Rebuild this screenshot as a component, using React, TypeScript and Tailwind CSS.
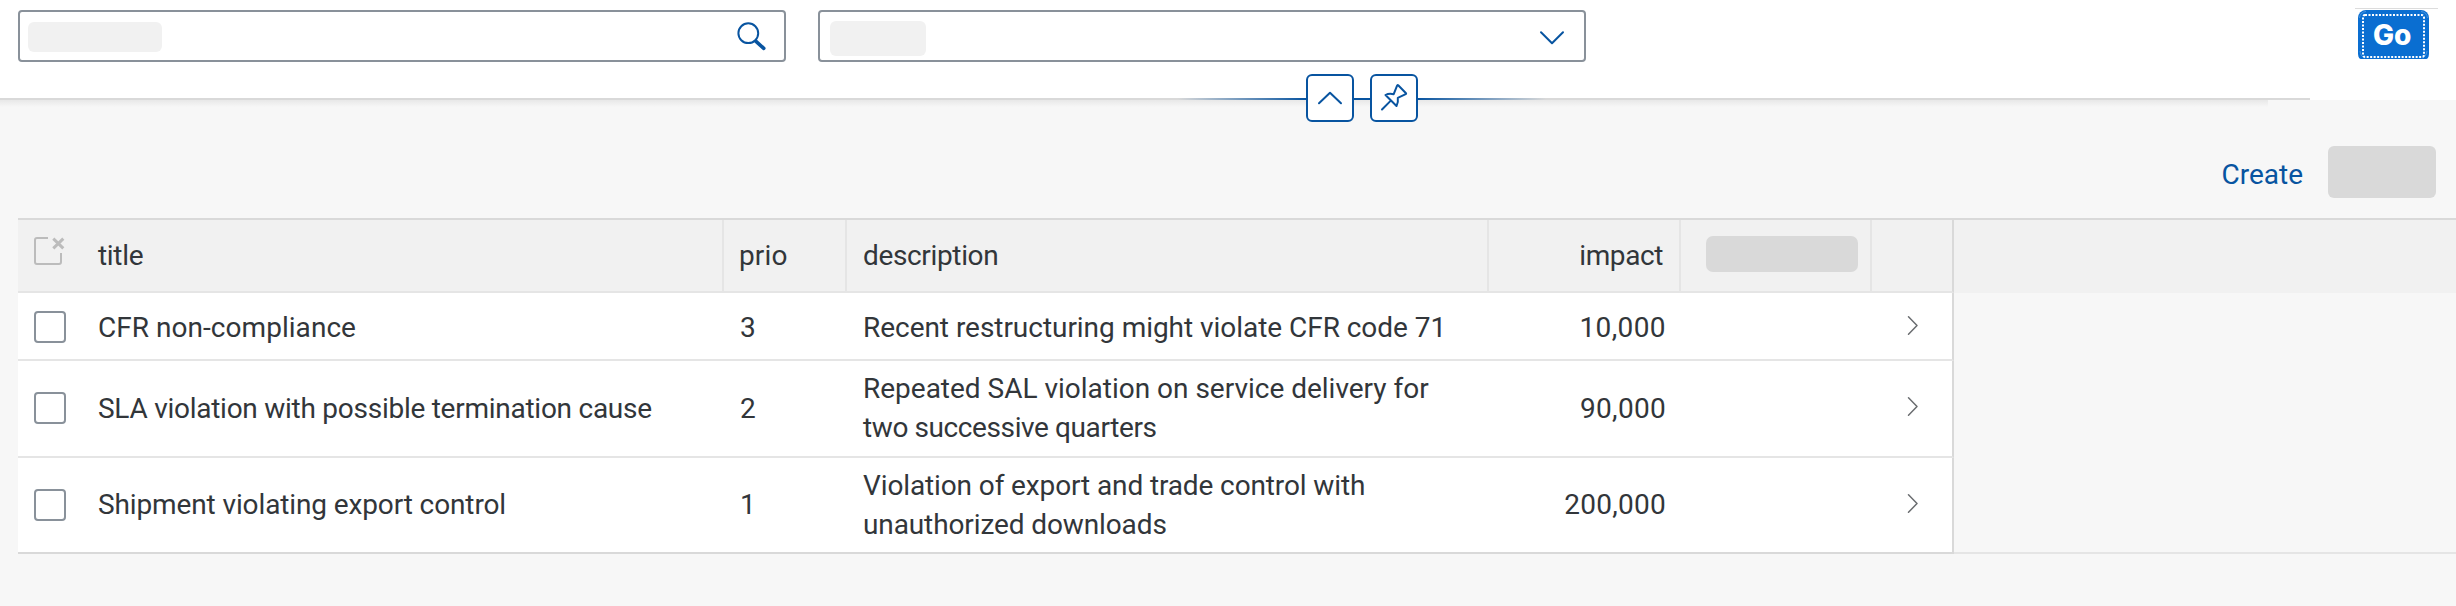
import React from "react";

type Risk = {
  title: string;
  titleTracking: string;
  prio: string;
  description: { text: string; tracking: string }[];
  impact: string;
  impactTracking: string;
  height: string;
  textPad: string;
  descriptionPad: string;
  boxTop: string;
  chevronTop: string;
  border: string;
};

const risks: Risk[] = [
  {
    title: "CFR non-compliance",
    titleTracking: "tracking-[0.04px]",
    prio: "3",
    description: [{ text: "Recent restructuring might violate CFR code 71", tracking: "tracking-[-0.04px]" }],
    impact: "10,000",
    impactTracking: "tracking-[0.4px]",
    height: "h-[68px]",
    textPad: "pt-[15px]",
    descriptionPad: "pt-[15px]",
    boxTop: "mt-[18px]",
    chevronTop: "mt-[22px]",
    border: "border-[#e5e5e5]",
  },
  {
    title: "SLA violation with possible termination cause",
    titleTracking: "tracking-[-0.26px]",
    prio: "2",
    description: [
      { text: "Repeated SAL violation on service delivery for", tracking: "tracking-[-0.01px]" },
      { text: "two successive quarters", tracking: "tracking-[-0.4px]" },
    ],
    impact: "90,000",
    impactTracking: "tracking-[0.3px]",
    height: "h-[97px]",
    textPad: "pt-[28px]",
    descriptionPad: "pt-[8px]",
    boxTop: "mt-[31px]",
    chevronTop: "mt-[35px]",
    border: "border-[#e5e5e5]",
  },
  {
    title: "Shipment violating export control",
    titleTracking: "tracking-[-0.12px]",
    prio: "1",
    description: [
      { text: "Violation of export and trade control with", tracking: "tracking-[-0.12px]" },
      { text: "unauthorized downloads", tracking: "tracking-[-0.11px]" },
    ],
    impact: "200,000",
    impactTracking: "tracking-[0.25px]",
    height: "h-[96px]",
    textPad: "pt-[27px]",
    descriptionPad: "pt-[8px]",
    boxTop: "mt-[31px]",
    chevronTop: "mt-[35px]",
    border: "border-[#d9d9d9]",
  },
];

const columns = "grid grid-cols-[706px_123px_642px_192px_191px_80px]";

function SearchIcon() {
  return (
    <svg width="30" height="30" viewBox="0 0 30 30" fill="none" stroke="#0854a0" className="mt-[10px] mr-[17px]">
      <circle cx="11.3" cy="11.2" r="9.9" strokeWidth="2" />
      <path d="M19 19.3 26.8 26.4" strokeWidth="3.6" strokeLinecap="round" />
    </svg>
  );
}

function RowChevron() {
  return (
    <svg width="12" height="21" viewBox="0 0 12 21" fill="none" stroke="#6a6d70" strokeWidth="1.5" strokeLinecap="round" strokeLinejoin="round">
      <path d="M1.5 1.7 10 10.5 1.5 19.3" />
    </svg>
  );
}

function FilterBar() {
  return (
    <header className="flex h-[98px] items-start bg-white pt-[10px] pl-[18px]">
      <div className="flex h-[52px] w-[768px] items-start justify-between rounded-[4px] border-2 border-[#89919a] bg-white">
        <div className="mt-[10px] ml-[8px] h-[30px] w-[134px] rounded-[6px] bg-[#f1f1f1]" />
        <SearchIcon />
      </div>
      <div className="ml-[32px] flex h-[52px] w-[768px] items-start justify-between rounded-[4px] border-2 border-[#89919a] bg-white">
        <div className="mt-[9px] ml-[10px] h-[35px] w-[96px] rounded-[6px] bg-[#f1f1f1]" />
        <svg width="26" height="16" viewBox="0 0 26 16" fill="none" stroke="#0854a0" strokeWidth="2" strokeLinecap="round" strokeLinejoin="round" className="mt-[18px] mr-[19px]">
          <path d="M2 2.2 13 13.2 24 2.2" />
        </svg>
      </div>
      <div className="-mt-[2px] mr-[18px] ml-auto w-[83px] border-t border-[#dcdcdc] pt-px pl-[3px]">
        <div className="h-[49px] w-[71px] overflow-hidden rounded-b-[3px]">
          <button className="relative flex h-[52px] w-[71px] items-start rounded-[8px] bg-[#0a6ed1] pt-[5px] pl-[15px] text-left font-['Inter',sans-serif] text-[28px] leading-[40px] font-extrabold text-white">
            Go
            <svg width="71" height="49" viewBox="0 0 71 49" fill="none" className="absolute top-0 left-0">
              <path d="M1.5 8C2 4 4 2 8 1.5M63 1.5c4 .5 6 2.500 6.500 6.500M2 41c.5 4 2 6 5 7M69 41c-.5 4-2 6-5 7" stroke="#5b9fe0" strokeWidth="0.8" />
              <rect x="5" y="5" width="61" height="42" rx="2" stroke="#fff" strokeWidth="2" strokeDasharray="2 1.5" />
            </svg>
          </button>
        </div>
      </div>
    </header>
  );
}

function HeaderDivider() {
  return (
    <div className="relative h-[2px] bg-white">
      <div className="h-[2px] w-[2310px] bg-[linear-gradient(90deg,#d9d9d9_1178px,#0854a0_1306px,#0854a0_1418px,#d9d9d9_1546px)]" />
      <div className="h-[7px] w-[2268px] bg-linear-to-b from-[#e8e8e8] to-[#f7f7f7]" />
      <div className="absolute top-[-24px] left-[1306px] flex gap-[16px]">
        <button className="h-[48px] w-[48px] rounded-[6px] border-2 border-[#0854a0] bg-white">
          <svg width="44" height="44" viewBox="0 0 44 44" fill="none" stroke="#0854a0" strokeWidth="2" strokeLinecap="round" strokeLinejoin="round">
            <path d="M11 27.300 22 16.800 33 27.300" />
          </svg>
        </button>
        <button className="h-[48px] w-[48px] rounded-[6px] border-2 border-[#0854a0] bg-white">
          <svg width="44" height="44" viewBox="0 0 44 44" fill="none" stroke="#0854a0" strokeWidth="2" strokeLinecap="round" strokeLinejoin="round">
            <path d="M26.200 9.200 34 17.200Q34.400 17.800 33.700 18.200L25.800 21.800Q26.500 26 24.500 30L13.500 19Q17 17 21.700 18.200L25 9.800Q25.500 8.600 26.200 9.200ZM18.800 24.600 10 33.500" />
          </svg>
        </button>
      </div>
    </div>
  );
}

function TableHeader() {
  return (
    <div className="flex h-[75px] border-t-2 border-[#d9d9d9] bg-[#f1f1f1]">
      <div className={`${columns} w-[1936px] border-r-2 border-b-2 border-r-[#d9d9d9] border-b-[#e5e5e5] leading-[39px]`}>
        <div className="flex border-r-2 border-[#e5e5e5] pl-[16px]">
          <svg width="32" height="32" viewBox="0 0 32 32" fill="none" stroke="#bcbcbc" strokeWidth="2" strokeLinecap="butt" className="mt-[16px]">
            <path d="M14 2H3Q1 2 1 4V26Q1 28 3 28H25Q27 28 27 26V17" />
            <path d="M19.300 2.700 29.300 12.300M29.300 2.700 19.300 12.300" strokeWidth="3" />
          </svg>
          <span className="pt-[16px] pl-[32px] tracking-[-0.3px]">title</span>
        </div>
        <div className="border-r-2 border-[#e5e5e5] pt-[16px] pl-[15px] tracking-[0.15px]">prio</div>
        <div className="border-r-2 border-[#e5e5e5] pt-[16px] pl-[16px] tracking-[-0.35px]">description</div>
        <div className="border-r-2 border-[#e5e5e5] pt-[16px] pr-[16px] text-right tracking-[-0.4px]">impact</div>
        <div className="border-r-2 border-[#e5e5e5] pt-[16px] pl-[25px]">
          <div className="h-[36px] w-[152px] rounded-[7px] bg-[#d9d9d9]" />
        </div>
        <div />
      </div>
    </div>
  );
}

function RiskRow({ risk }: { risk: Risk }) {
  return (
    <div className={`${columns} ${risk.height} ${risk.border} w-[1936px] border-r-2 border-b-2 border-r-[#d9d9d9] bg-white leading-[39px]`}>
      <div className="flex items-start pl-[16px]">
        <div className={`${risk.boxTop} h-[32px] w-[32px] rounded-[4px] border-2 border-[#89919a]`} />
        <span className={`${risk.textPad} ${risk.titleTracking} pl-[32px] whitespace-nowrap`}>{risk.title}</span>
      </div>
      <div className={`${risk.textPad} pl-[16px]`}>{risk.prio}</div>
      <div className={`${risk.descriptionPad} pl-[16px]`}>
        {risk.description.map((line) => (
          <div key={line.text} className={`${line.tracking} whitespace-nowrap`}>
            {line.text}
          </div>
        ))}
      </div>
      <div className={`${risk.textPad} ${risk.impactTracking} pr-[15px] text-right`}>{risk.impact}</div>
      <div />
      <div className={`${risk.chevronTop} pl-[35px]`}>
        <RowChevron />
      </div>
    </div>
  );
}

export default function App() {
  return (
    <div className="h-[606px] w-[2456px] overflow-hidden bg-[#f7f7f7] font-['Roboto',sans-serif] text-[28px] text-[#32363a]">
      <FilterBar />
      <HeaderDivider />
      <div className="flex h-[118px] items-start justify-end pt-[46px] pr-[20px]">
        <button className="mr-[25px] pt-[9px] leading-[39px] text-[#0854a0]">Create</button>
        <div className="h-[52px] w-[108px] rounded-[6px] bg-[#d9d9d9]" />
      </div>
      <main className="ml-[18px]">
        <TableHeader />
        <div className="border-b-2 border-[#e5e5e5]">
          <div className="-mb-[2px]">
            {risks.map((risk) => (
              <RiskRow key={risk.title} risk={risk} />
            ))}
          </div>
        </div>
      </main>
    </div>
  );
}
